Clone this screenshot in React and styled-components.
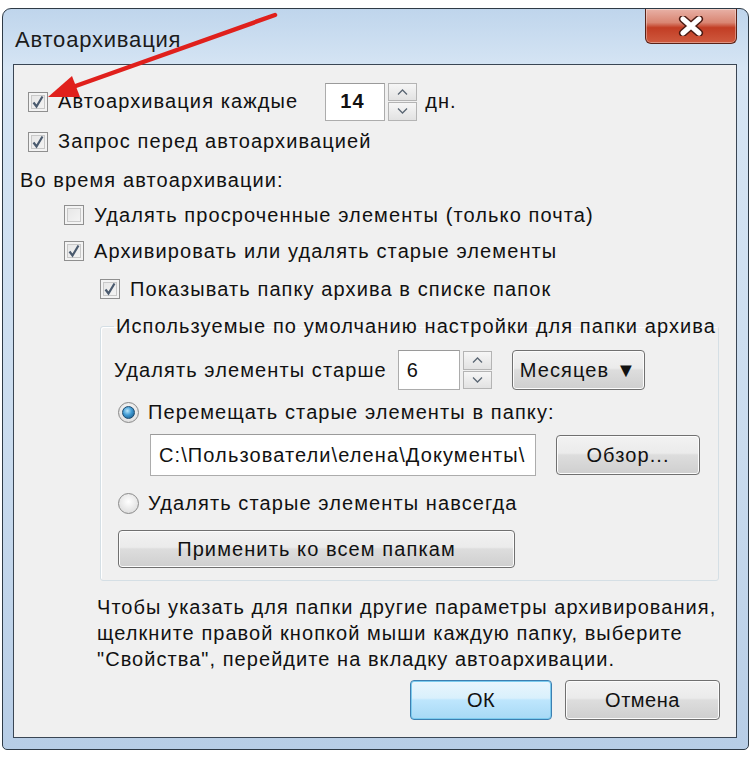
import React from 'react'
import styled, { createGlobalStyle } from 'styled-components'

const Global = createGlobalStyle`
  html, body { margin: 0; padding: 0; background: #fff; }
  body { font-family: "Liberation Sans", Arial, sans-serif; color: #111; }
`

const Page = styled.div`
  position: relative;
  width: 752px;
  height: 760px;
  padding: 8px 3px 0 2px;
  box-sizing: border-box;
`

const Window = styled.div`
  height: 742px;
  box-sizing: border-box;
  border: 1px solid #2e3a46;
  border-radius: 9px 9px 5px 5px;
  background: linear-gradient(180deg, #bfd5ec 0%, #d6e5f4 8%, #c9dbee 60%, #b7cde6 100%);
  padding: 0 11px 11px 10px;
  display: flex;
  flex-direction: column;
`

const TitleBar = styled.div`
  height: 55px;
  display: flex;
  justify-content: space-between;
  align-items: flex-start;
`

const Title = styled.div`
  font-size: 22px;
  letter-spacing: 0.8px;
  padding: 18px 0 0 2px;
  color: #1b1b1b;
`

const CloseBtn = styled.div`
  width: 92px;
  height: 35px;
  box-sizing: border-box;
  border: 1px solid #5a2217;
  border-top: none;
  border-radius: 0 0 6px 6px;
  background: linear-gradient(180deg, #e8b1a6 0%, #d98572 40%, #c23d24 55%, #cf5a3f 100%);
  display: flex;
  align-items: center;
  justify-content: center;
  box-shadow: inset 0 0 0 1px rgba(255, 255, 255, 0.35);
`

const Client = styled.div`
  flex: 1;
  background: #f0f0f0;
  border: 1px solid #3a4654;
  display: flex;
  flex-direction: column;
  padding: 17px 14px 0 6px;
  letter-spacing: 1.1px;
`

const Row = styled.div`
  display: flex;
  align-items: center;
  height: ${p => p.$h || 38}px;
  padding-left: ${p => p.$indent || 0}px;
  font-size: 20px;
  white-space: nowrap;
`

const Label = styled.span`
  margin-left: ${p => p.$ml || 0}px;
  margin-right: ${p => p.$mr || 0}px;
`

const Box = styled.span`
  width: 20px;
  height: 20px;
  box-sizing: border-box;
  border: 1px solid #8f8f8f;
  background: linear-gradient(135deg, #e4e4e4 0%, #f6f6f6 100%);
  box-shadow: inset 0 0 0 2px #f3f3f3, inset 0 0 0 3px #c8c8c8;
  display: inline-flex;
  align-items: center;
  justify-content: center;
  margin-right: 10px;
  flex-shrink: 0;
`

const Radio = styled.span`
  width: 21px;
  height: 21px;
  box-sizing: border-box;
  border-radius: 50%;
  border: 1px solid #8a8a8a;
  background: radial-gradient(circle at 50% 40%, #ffffff 0%, #e2e2e2 70%, #cfcfcf 100%);
  display: inline-flex;
  align-items: center;
  justify-content: center;
  margin-right: 9px;
  flex-shrink: 0;
`

const RadioDot = styled.span`
  width: 11px;
  height: 11px;
  border-radius: 50%;
  background: radial-gradient(circle at 40% 35%, #b9e6fb 0%, #3f9ad3 45%, #14507f 100%);
  border: 1px solid #1b4a6f;
`

const Input = styled.div`
  width: ${p => p.$w}px;
  height: ${p => p.$hh || 38}px;
  box-sizing: border-box;
  background: #fff;
  border: 1px solid #acacac;
  border-top-color: #9a9a9a;
  display: flex;
  align-items: center;
  padding-left: ${p => p.$pl || 14}px;
  font-size: 20px;
  font-weight: ${p => (p.$bold ? 700 : 400)};
  overflow: hidden;
  margin-left: ${p => p.$ml || 0}px;
  flex-shrink: 0;
`

const Spin = styled.div`
  width: 29px;
  height: 38px;
  margin-left: 3px;
  display: flex;
  flex-direction: column;
  gap: 1px;
  flex-shrink: 0;
`

const SpinHalf = styled.div`
  flex: 1;
  border: 1px solid #b4b4b4;
  background: linear-gradient(180deg, #f6f6f6, #e2e2e2);
  display: flex;
  align-items: center;
  justify-content: center;
`

const Button = styled.div`
  width: ${p => p.$w}px;
  height: ${p => p.$hh || 40}px;
  box-sizing: border-box;
  margin-left: ${p => p.$ml || 0}px;
  border: 1px solid ${p => (p.$def ? '#3c7fb1' : '#707070')};
  border-radius: 4px;
  background: ${p =>
    p.$def
      ? 'linear-gradient(180deg, #eaf6fd 0%, #d9f0fc 45%, #bee6fd 50%, #a7d9f5 100%)'
      : 'linear-gradient(180deg, #f2f2f2 0%, #ebebeb 45%, #dddddd 50%, #cfcfcf 100%)'};
  box-shadow: inset 0 0 0 1px ${p => (p.$def ? '#7ccbee' : '#fcfcfc')};
  display: flex;
  align-items: center;
  justify-content: center;
  font-size: 20px;
  color: #111;
  flex-shrink: 0;
`

const Group = styled.fieldset`
  margin: 0 14px 0 80px;
  padding: 0 0 12px 13px;
  border: 1px solid #d5dfe5;
  border-radius: 3px;
  box-shadow: inset 1px 1px 0 #fff;
`

const Legend = styled.legend`
  font-size: 20px;
  padding: 0 2px;
  line-height: 36px;
  white-space: nowrap;
`

const Note = styled.p`
  margin: 13px 0 0 77px;
  font-size: 20px;
  line-height: 26px;
  white-space: nowrap;
  letter-spacing: 1.05px;
`

const Footer = styled.div`
  display: flex;
  justify-content: flex-end;
  gap: 13px;
  margin-top: 8px;
  padding-right: 2px;
  letter-spacing: 0.5px;
`

const Arrow = styled.svg`
  position: absolute;
  left: 0;
  top: 0;
  pointer-events: none;
`

function Check({ checked }) {
  return (
    <Box>
      {checked && (
        <svg width="14" height="14" viewBox="0 0 14 14">
          <path d="M2.5 7.5 L5.5 11.5 L11.5 1.5" fill="none" stroke="#4a5a6e" strokeWidth="2.2" />
        </svg>
      )}
    </Box>
  )
}

function Spinner() {
  return (
    <Spin>
      <SpinHalf>
        <svg width="11" height="6" viewBox="0 0 11 6"><path d="M1 5.5 L5.5 1 L10 5.5" fill="none" stroke="#5a6673" strokeWidth="1.3" /></svg>
      </SpinHalf>
      <SpinHalf>
        <svg width="11" height="6" viewBox="0 0 11 6"><path d="M1 0.5 L5.5 5 L10 0.5" fill="none" stroke="#5a6673" strokeWidth="1.3" /></svg>
      </SpinHalf>
    </Spin>
  )
}

export default function App() {
  return (
    <Page>
      <Global />
      <Window>
        <TitleBar>
          <Title>Автоархивация</Title>
          <CloseBtn>
            <svg width="28" height="20" viewBox="0 0 28 20">
              <path d="M6 3 L22 17 M22 3 L6 17" stroke="#4a1a12" strokeWidth="8" strokeLinecap="round" />
              <path d="M6 3 L22 17 M22 3 L6 17" stroke="#ffffff" strokeWidth="5" strokeLinecap="round" />
            </svg>
          </CloseBtn>
        </TitleBar>
        <Client>
          <Row $h={39} $indent={8}>
            <Check checked />
            <Label $mr={27}>Автоархивация каждые</Label>
            <Input $w={60} $bold>14</Input>
            <Spinner />
            <Label $ml={8}>дн.</Label>
          </Row>
          <Row $h={41} $indent={8}>
            <Check checked />
            <Label>Запрос перед автоархивацией</Label>
          </Row>
          <Row $h={36}>
            <Label>Во время автоархивации:</Label>
          </Row>
          <Row $h={34} $indent={44}>
            <Check />
            <Label>Удалять просроченные элементы (только почта)</Label>
          </Row>
          <Row $h={38} $indent={44}>
            <Check checked />
            <Label>Архивировать или удалять старые элементы</Label>
          </Row>
          <Row $h={38} $indent={80}>
            <Check checked />
            <Label>Показывать папку архива в списке папок</Label>
          </Row>
          <Group>
            <Legend>Используемые по умолчанию настройки для папки архива</Legend>
            <Row $h={40} style={{ marginTop: 6 }}>
              <Label $mr={11}>Удалять элементы старше</Label>
              <Input $w={62} $hh={40} $pl={8}>6</Input>
              <Spinner />
              <Button $w={133} $ml={20}>Месяцев&nbsp;▼</Button>
            </Row>
            <Row $h={44} $indent={4}>
              <Radio><RadioDot /></Radio>
              <Label>Перемещать старые элементы в папку:</Label>
            </Row>
            <Row $h={42}>
              <Input $w={386} $hh={42} $ml={36} $pl={8}>C:\Пользователи\елена\Документы\</Input>
              <Button $w={144} $ml={20}>Обзор...</Button>
            </Row>
            <Row $h={54} $indent={4}>
              <Radio />
              <Label>Удалять старые элементы навсегда</Label>
            </Row>
            <Row $h={38} $indent={4}>
              <Button $w={397} $hh={38}>Применить ко всем папкам</Button>
            </Row>
          </Group>
          <Note>
            Чтобы указать для папки другие параметры архивирования,<br />
            щелкните правой кнопкой мыши каждую папку, выберите<br />
            "Свойства", перейдите на вкладку автоархивации.
          </Note>
          <Footer>
            <Button $w={142} $def>ОК</Button>
            <Button $w={155}>Отмена</Button>
          </Footer>
        </Client>
      </Window>
      <Arrow width="752" height="760">
        <line x1="275" y1="15" x2="70" y2="88" stroke="#e0201c" strokeWidth="4.5" strokeLinecap="round" />
        <polygon points="48,97 72,76 80,97" fill="#e0201c" />
      </Arrow>
    </Page>
  )
}
